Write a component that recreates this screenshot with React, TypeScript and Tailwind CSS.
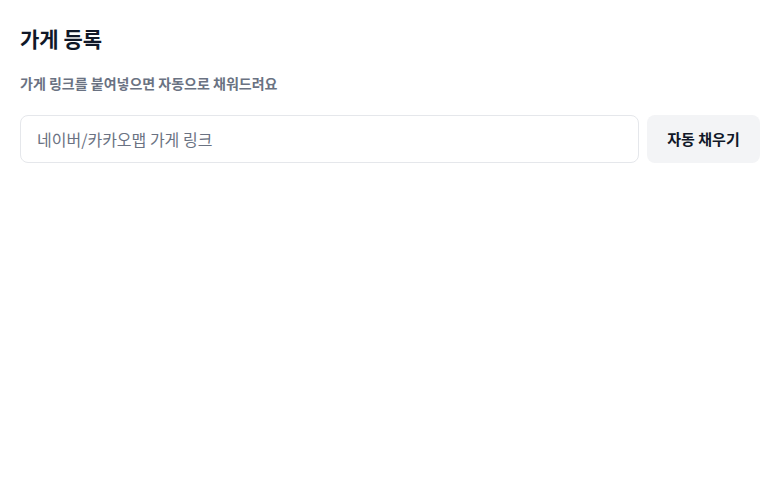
import React from 'react';

function App() {
  return (
    <div className="min-h-screen bg-white p-5" style={{ fontFamily: '"Noto Sans CJK KR", "Noto Sans", sans-serif' }}>
      <h1 className="text-[21px] font-bold text-gray-900 leading-7 mt-1">가게 등록</h1>
      <p className="mt-[21px] text-sm leading-5 font-semibold text-gray-500">가게 링크를 붙여넣으면 자동으로 채워드려요</p>
      <div className="mt-[22px] flex gap-2">
        <input
          className="h-12 flex-1 rounded-lg border border-gray-200 px-4 text-base text-gray-900 placeholder:text-gray-500 outline-none"
          placeholder="네이버/카카오맵 가게 링크"
        />
        <button className="h-12 w-[113px] rounded-lg bg-gray-100 text-[15px] font-bold text-gray-900">자동 채우기</button>
      </div>
    </div>
  );
}

export default App;
